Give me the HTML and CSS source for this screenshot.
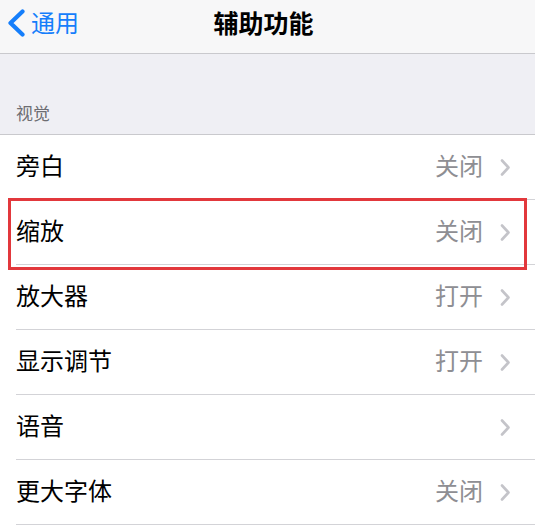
FILE: index.html
```html
<!DOCTYPE html>
<html lang="zh-CN">
<head>
  <meta charset="UTF-8" />
  <meta name="viewport" content="width=device-width, initial-scale=1.0"/>
  <title>辅助功能</title>
  <link rel="stylesheet" href="styles.css">
</head>
<body>
  <header class="navbar">
    <a class="back" href="#">
      <svg class="back-icon" width="20" height="28" viewBox="0 0 20 28">
        <path d="M16.5 2.5 L4.5 14 L16.5 25.5" fill="none" stroke="#157efb" stroke-width="4.2" stroke-linecap="round" stroke-linejoin="round"/>
      </svg>
      <span>通用</span>
    </a>
    <h1 class="title">辅助功能</h1>
    <div></div>
  </header>

  <div class="section-head">视觉</div>

  <ul class="group">
    <li class="row">
      <span class="label">旁白</span>
      <span class="value">关闭</span>
      <svg class="chevron" width="11" height="17" viewBox="0 0 11 17"><path d="M2 1.5 L8.5 8.5 L2 15.5" fill="none" stroke="#c4c4c9" stroke-width="2.6" stroke-linecap="round" stroke-linejoin="round"/></svg>
    </li>
    <li class="row marked">
      <span class="label">缩放</span>
      <span class="value">关闭</span>
      <svg class="chevron" width="11" height="17" viewBox="0 0 11 17"><path d="M2 1.5 L8.5 8.5 L2 15.5" fill="none" stroke="#c4c4c9" stroke-width="2.6" stroke-linecap="round" stroke-linejoin="round"/></svg>
    </li>
    <li class="row">
      <span class="label">放大器</span>
      <span class="value">打开</span>
      <svg class="chevron" width="11" height="17" viewBox="0 0 11 17"><path d="M2 1.5 L8.5 8.5 L2 15.5" fill="none" stroke="#c4c4c9" stroke-width="2.6" stroke-linecap="round" stroke-linejoin="round"/></svg>
    </li>
    <li class="row">
      <span class="label">显示调节</span>
      <span class="value">打开</span>
      <svg class="chevron" width="11" height="17" viewBox="0 0 11 17"><path d="M2 1.5 L8.5 8.5 L2 15.5" fill="none" stroke="#c4c4c9" stroke-width="2.6" stroke-linecap="round" stroke-linejoin="round"/></svg>
    </li>
    <li class="row">
      <span class="label">语音</span>
      <span class="value"></span>
      <svg class="chevron" width="11" height="17" viewBox="0 0 11 17"><path d="M2 1.5 L8.5 8.5 L2 15.5" fill="none" stroke="#c4c4c9" stroke-width="2.6" stroke-linecap="round" stroke-linejoin="round"/></svg>
    </li>
    <li class="row">
      <span class="label">更大字体</span>
      <span class="value">关闭</span>
      <svg class="chevron" width="11" height="17" viewBox="0 0 11 17"><path d="M2 1.5 L8.5 8.5 L2 15.5" fill="none" stroke="#c4c4c9" stroke-width="2.6" stroke-linecap="round" stroke-linejoin="round"/></svg>
    </li>
  </ul>
</body>
</html>
```

FILE: styles.css
```css
html, body {
  margin: 0;
  padding: 0;
  background: #efeff4;
  font-family: "Noto Sans CJK SC", "Noto Sans", sans-serif;
  overflow: hidden;
}

.navbar {
  height: 54px;
  box-sizing: border-box;
  padding: 0 8px 9px 0;
  background: #f7f7f8;
  border-bottom: 1px solid #c9c9cd;
  display: grid;
  grid-template-columns: 1fr auto 1fr;
  align-items: center;
}

.back {
  display: flex;
  align-items: center;
  gap: 5px;
  padding-left: 6px;
  color: #157efb;
  text-decoration: none;
  font-size: 24px;
  line-height: 28px;
}

.back-icon {
  display: block;
  margin-top: 2px;
}

.title {
  margin: 0;
  font-size: 25px;
  font-weight: 600;
  line-height: 28px;
  color: #000;
}

.section-head {
  height: 81px;
  box-sizing: border-box;
  padding: 50px 16px 0;
  font-size: 17px;
  line-height: 18px;
  color: #6d6d72;
  border-bottom: 1px solid #c9c9cd;
}

.group {
  list-style: none;
  margin: 0;
  padding: 0 0 0 16px;
  background: #fff;
}

.row {
  position: relative;
  height: 64px;
  display: flex;
  align-items: center;
  padding-right: 24px;
  border-bottom: 1px solid #d3d3d7;
}

.label {
  flex: 1;
  font-size: 24px;
  line-height: 30px;
  margin-bottom: 5px;
  color: #000;
}

.value {
  font-size: 24px;
  line-height: 30px;
  margin-bottom: 5px;
  color: #8e8e93;
  margin-right: 17px;
}

.chevron {
  display: block;
}

.marked::after {
  content: "";
  position: absolute;
  left: -8px;
  right: 8px;
  top: -2px;
  bottom: -6px;
  border: 3px solid #e2383c;
  pointer-events: none;
}
```
